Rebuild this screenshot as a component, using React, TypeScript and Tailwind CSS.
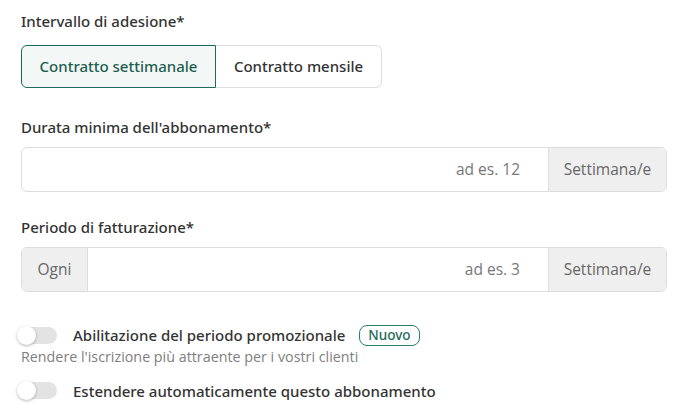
import React, { useState } from "react"

const Toggle = ({ on, onChange }: { on: boolean; onChange: () => void }) => (
  <button
    onClick={onChange}
    className={`relative h-[17px] w-[39px] shrink-0 rounded-full ${on ? "bg-[#1e6b5a]" : "bg-[#e3e3e3]"}`}
  >
    <span
      className={`absolute top-[-1px] h-[19px] w-[19px] rounded-full bg-white shadow-[0_1px_3px_rgba(0,0,0,0.3)] ${on ? "left-[21px]" : "left-[-1px]"}`}
    />
  </button>
)

const App = () => {
  const [interval, setInterval] = useState("week")
  const [promo, setPromo] = useState(false)
  const [extend, setExtend] = useState(false)

  return (
    <div className="h-[418px] w-[688px] bg-white px-[21px] pt-[10px] font-['Open_Sans',sans-serif] text-[#333]">
      {/* Intervallo */}
      <div className="font-['Noto_Sans',sans-serif] text-[15px] font-medium leading-[22px]">Intervallo di adesione*</div>
      <div className="mt-[13px] flex font-['Noto_Sans',sans-serif]">
        <button
          onClick={() => setInterval("week")}
          className={`h-[43px] w-[195px] rounded-l-[6px] border text-[15px] font-medium ${interval === "week" ? "border-[#1e6b5a] bg-[#f3f8f6] text-[#1e5e50]" : "border-[#dedede] bg-white text-[#333]"}`}
        >
          Contratto settimanale
        </button>
        <button
          onClick={() => setInterval("month")}
          className={`h-[43px] w-[166px] rounded-r-[6px] border text-[15px] font-medium ${interval === "month" ? "border-[#1e6b5a] bg-[#f3f8f6] text-[#1e5e50]" : "border-[#dedede] border-l-0 bg-white text-[#333]"}`}
        >
          Contratto mensile
        </button>
      </div>

      {/* Durata minima */}
      <div className="mt-[28px] font-['Noto_Sans',sans-serif] text-[15px] font-medium leading-[22px]">Durata minima dell'abbonamento*</div>
      <div className="mt-[9px] flex h-[45px] w-[646px] overflow-hidden rounded-[6px] border border-[#dcdcdc]">
        <input
          placeholder="ad es. 12"
          className="min-w-0 flex-1 pr-[28px] text-right text-[15.5px] outline-none placeholder:text-[#777]"
        />
        <div className="flex w-[118px] items-center justify-center border-l border-[#dcdcdc] bg-[#efefef] text-[15.5px] text-[#666]">
          Settimana/e
        </div>
      </div>

      {/* Periodo di fatturazione */}
      <div className="mt-[24px] font-['Noto_Sans',sans-serif] text-[15px] font-medium leading-[22px]">Periodo di fatturazione*</div>
      <div className="mt-[9px] flex h-[45px] w-[646px] overflow-hidden rounded-[6px] border border-[#dcdcdc]">
        <div className="flex w-[66px] items-center justify-center border-r border-[#dcdcdc] bg-[#efefef] text-[15.5px] text-[#666]">
          Ogni
        </div>
        <input
          placeholder="ad es. 3"
          className="min-w-0 flex-1 pr-[28px] text-right text-[15.5px] outline-none placeholder:text-[#777]"
        />
        <div className="flex w-[118px] items-center justify-center border-l border-[#dcdcdc] bg-[#efefef] text-[15.5px] text-[#666]">
          Settimana/e
        </div>
      </div>

      {/* Toggles */}
      <div className="mt-[32px] flex items-center font-['Noto_Sans',sans-serif]">
        <div className="ml-[-3px] flex">
          <Toggle on={promo} onChange={() => setPromo(!promo)} />
        </div>
        <span className="ml-[16px] text-[15px] font-medium">Abilitazione del periodo promozionale</span>
        <span className="ml-[14px] flex h-[21px] items-center rounded-[8px] border border-[#2b8070] px-[8px] text-[13.5px] font-medium text-[#1e6b5a]">
          Nuovo
        </span>
      </div>
      <div className="text-[14.3px] leading-[19px] text-[#808080]">
        Rendere l'iscrizione più attraente per i vostri clienti
      </div>
      <div className="mt-[14px] flex items-center font-['Noto_Sans',sans-serif]">
        <div className="ml-[-3px] flex">
          <Toggle on={extend} onChange={() => setExtend(!extend)} />
        </div>
        <span className="ml-[16px] text-[15px] font-medium">Estendere automaticamente questo abbonamento</span>
      </div>
    </div>
  )
}

export default App
